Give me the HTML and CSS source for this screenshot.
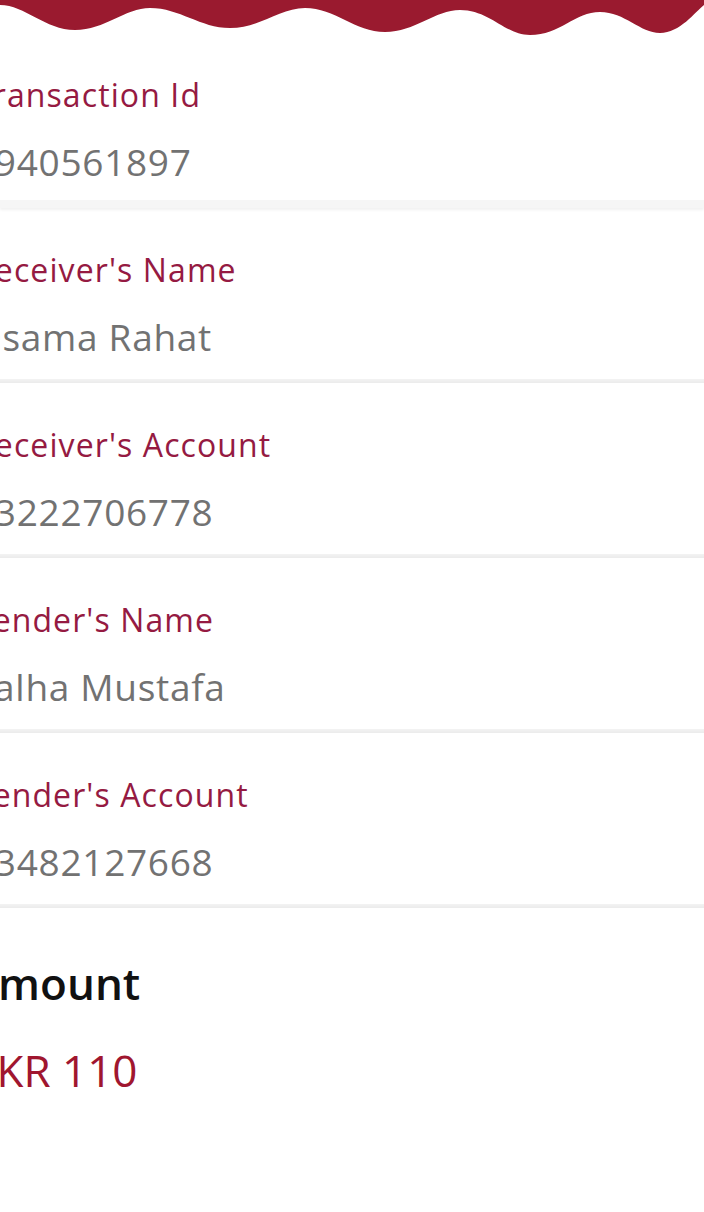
FILE: index.html
```html
<!DOCTYPE html>
<html lang="en">
<head>
<meta charset="utf-8">
<title>Transaction Details</title>
<link rel="stylesheet" href="styles.css">
</head>
<body>
<div class="page">
  <svg class="wave" viewBox="0 0 704 36" width="704" height="36" preserveAspectRatio="none" aria-hidden="true">
    <path d="M0,5 C25,5 45,30 75,30 C105,30 125,8 150,8 C180,8 200,28 230,28 C260,28 280,8 305,8 C335,8 355,32 385,32 C415,32 435,10 460,10 C490,10 505,35 530,35 C560,35 575,12 600,12 C625,12 640,33 660,33 C680,33 695,12 704,5 L704,0 L0,0 Z" fill="#9a1a2f"/>
  </svg>
  <div class="details">
    <div class="row row-first">
      <div class="label">Transaction Id</div>
      <div class="value">1940561897</div>
    </div>
    <div class="band"></div>
    <div class="row">
      <div class="label">Receiver's Name</div>
      <div class="value">Osama Rahat</div>
    </div>
    <div class="sep"></div>
    <div class="row">
      <div class="label">Receiver's Account</div>
      <div class="value">03222706778</div>
    </div>
    <div class="sep"></div>
    <div class="row">
      <div class="label">Sender's Name</div>
      <div class="value">Talha Mustafa</div>
    </div>
    <div class="sep"></div>
    <div class="row">
      <div class="label">Sender's Account</div>
      <div class="value">03482127668</div>
    </div>
    <div class="sep"></div>
    <div class="amount">
      <div class="amount-title">Amount</div>
      <div class="amount-value">PKR 110</div>
    </div>
  </div>
</div>
</body>
</html>
```
FILE: styles.css
```css
* { box-sizing: border-box; }
html, body { margin: 0; padding: 0; background: #ffffff; }
body {
  width: 704px;
  overflow: hidden;
  font-family: "Open Sans", "Noto Sans", sans-serif;
}
.page { width: 704px; min-height: 1212px; overflow: hidden; }
.wave { display: block; width: 704px; height: 36px; }
.details { display: flex; flex-direction: column; }
.row {
  display: flex;
  flex-direction: column;
  gap: 23px;
  padding: 42px 0 18px 0;
}
.row-first { padding-top: 39px; padding-bottom: 14px; }
.label {
  margin-left: -26px;
  font-size: 32px;
  line-height: 40px;
  letter-spacing: 1.1px;
  color: #951a42;
  white-space: nowrap;
}
.value {
  margin-left: -27px;
  font-size: 37px;
  line-height: 48px;
  letter-spacing: 0.7px;
  color: #727272;
  white-space: nowrap;
}
.band {
  height: 8px;
  background: #f6f6f6;
  box-shadow: 0 2px 3px rgba(0,0,0,0.06);
}
.sep {
  height: 4px;
  background: linear-gradient(#f3f3f3, #ebebeb);
}
.amount {
  display: flex;
  flex-direction: column;
  gap: 30px;
  padding-top: 47px;
}
.amount-title {
  margin-left: -31px;
  font-size: 44px;
  line-height: 56px;
  font-weight: 600;
  color: #111111;
  white-space: nowrap;
}
.amount-value {
  margin-left: -30px;
  font-size: 44px;
  line-height: 58px;
  color: #a0162f;
  white-space: nowrap;
}
```
